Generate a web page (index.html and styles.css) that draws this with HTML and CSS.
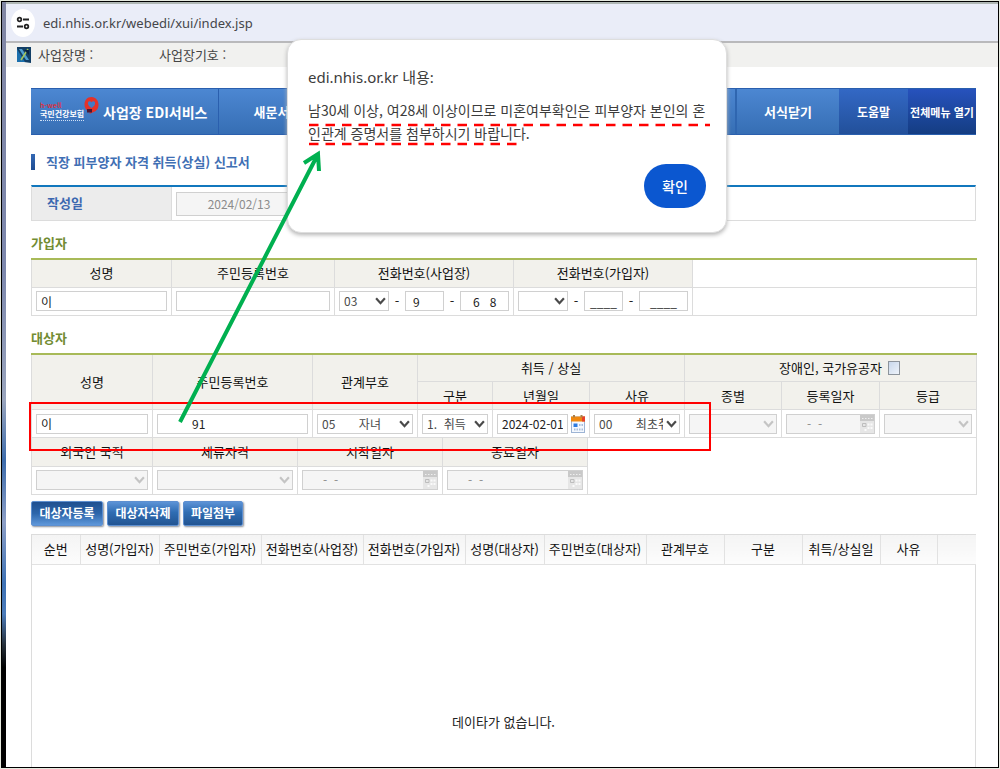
FILE: index.html
```html
<!DOCTYPE html>
<html lang="ko">
<head>
<meta charset="utf-8">
<title>사업장 EDI서비스</title>
<link rel="stylesheet" href="styles.css">
</head>
<body>
<svg class="sprite" aria-hidden="true">
  <symbol id="chevron" viewBox="0 0 10 7"><path d="M1 1l4 4.5L9 1" fill="none" stroke="currentColor" stroke-width="2"/></symbol>
  <symbol id="calendar" viewBox="0 0 14 18">
    <rect x=".5" y="2" width="13" height="15.5" fill="#f4f8fe" stroke="#9db4d4"/>
    <path d="M0 1.500h14v5H0z" fill="#f0880f"/><path d="M11 1.500h3v5h-3z" fill="#e8402a"/>
    <path d="M2 0h2v2.500H2zM9.500 0h2v2.500h-2z" fill="#a9804c"/>
    <path d="M2.500 8.500h4v3.500h-4z" fill="#2c7be0"/>
    <path d="M8 9h1.500v2H8zM10.500 9H12v2h-1.500zM3 13.500h1.500v2H3zM5.500 13.500H7v2H5.500zM8 13.500h1.500v2H8zM10.500 13.500H12v2h-1.500z" fill="#a9bedb"/>
  </symbol>
  <symbol id="calendar-off" viewBox="0 0 14 18">
    <path d="M0 0h14v18H0z" fill="#e6e6e6"/><path d="M0 0h14v6H0z" fill="#c9c9c9"/>
    <path d="M2 3h1.500v1H2zM5 3h1.500v1H5zM8 3h1.500v1H8zM11 3h1.500v1H11z" fill="#eee"/>
    <path d="M2.500 8.500h3.500v3H2.500z" fill="none" stroke="#bdbdbd"/>
    <path d="M7.500 8.500h2v2h-2zM10.500 8.500h2v2h-2zM7.500 12h2v2h-2zM10.500 12h2v2h-2zM4.500 14h2v2h-2z" fill="#fafafa"/>
  </symbol>
</svg>

<div class="frame">
  <header class="urlbar">
    <button class="site-info" aria-label="사이트 정보">
      <svg width="14" height="14" viewBox="0 0 14 14" fill="none" stroke="#222" stroke-width="1.800"><circle cx="3.500" cy="3.500" r="1.800"/><path d="M7 3.500h6M1 10.500h6"/><circle cx="10.500" cy="10.500" r="1.800"/></svg>
    </button>
    <span class="url">edi.nhis.or.kr/webedi/xui/index.jsp</span>
  </header>
  <div class="infobar">
    <svg width="14" height="16" viewBox="0 0 14 16"><path d="M0 0h14v16L0 14z" fill="#123f66"/><path d="M0 2l8 13H0z" fill="#1c70ad"/><path d="M2 2h3l7 11H9z" fill="#4f9ed0"/><path d="M11 2L4 13" stroke="#a7c659" stroke-width="1.500"/><path d="M7 3h5v5z" fill="#0a2443"/></svg>
    <span class="info-name">사업장명 :</span><span>사업장기호 :</span>
  </div>

  <main class="content">
    <nav class="menu">
      <div class="brand">
        <div class="logo">
          <span class="logo-tag">h-well</span>
          <span class="logo-name">국민건강보험</span>
          <span class="logo-rule"></span>
        </div>
        <svg class="logo-mark" width="15" height="18" viewBox="0 0 15 18"><path d="M7.500 0C3 0 .5 3.500.5 7.500S3 14 6 15l-.5 2 4-2C13 14 14.500 11 14.500 7.500S12 0 7.500 0z" fill="#e53228"/><path d="M7.500 11C5 9.500 3.500 7.500 4 5.500c.5-1.500 2.500-1.800 3.500-.3 1-1.500 3-1.200 3.500.3.500 2-1 4-3.500 5.500z" fill="#427bc5"/><path d="M3 12h5v3.500H3z" fill="#4c1733"/></svg>
        <span class="brand-name">사업장 EDI서비스</span>
      </div>
      <button class="item new">새문서</button>
      <div class="item filler"></div>
      <button class="item close">서식닫기</button>
      <button class="item help">도움말</button>
      <button class="item all">전체메뉴 열기</button>
    </nav>

    <h1 class="page-title">직장 피부양자 자격 취득(상실) 신고서</h1>

    <div class="date-row">
      <label class="date-label" for="written">작성일</label>
      <div class="date-cell"><input class="field date" id="written" value="2024/02/13" disabled></div>
    </div>

    <h2 class="section">가입자</h2>
    <table class="form">
      <colgroup><col class="w140"><col class="w163"><col class="w179"><col class="w179"><col class="w284"></colgroup>
      <tr><th>성명</th><th>주민등록번호</th><th>전화번호(사업장)</th><th>전화번호(가입자)</th><td></td></tr>
      <tr>
        <td><input class="field" aria-label="성명" value="이"></td>
        <td><input class="field" aria-label="주민등록번호"></td>
        <td><div class="phone">
          <span class="combo area"><select aria-label="지역번호"><option>03</option></select><svg class="chev"><use href="#chevron"/></svg></span>-
          <input class="field mid" aria-label="국번" value="9">-
          <input class="field end" aria-label="번호" value="6&nbsp;&nbsp;&nbsp;8"></div></td>
        <td><div class="phone">
          <span class="combo area"><select aria-label="지역번호"><option></option></select><svg class="chev"><use href="#chevron"/></svg></span>-
          <input class="field mid blank" aria-label="국번" value="____">-
          <input class="field end blank" aria-label="번호" value="____"></div></td>
        <td></td>
      </tr>
    </table>

    <h2 class="section">대상자</h2>
    <table class="form">
      <colgroup><col class="w121"><col class="w160"><col class="w105"><col class="w75"><col class="w97"><col class="w95"><col class="w97"><col class="w98"><col class="w97"></colgroup>
      <tr><th rowspan="2">성명</th><th rowspan="2">주민등록번호</th><th rowspan="2">관계부호</th><th colspan="3">취득 / 상실</th>
        <th colspan="3"><label class="merit">장애인, 국가유공자 <input class="tick" type="checkbox"></label></th></tr>
      <tr><th>구분</th><th>년월일</th><th>사유</th><th>종별</th><th>등록일자</th><th>등급</th></tr>
      <tr>
        <td><input class="field" aria-label="성명" value="이"></td>
        <td><input class="field resident" aria-label="주민등록번호" value="91"></td>
        <td><span class="combo"><select aria-label="관계부호"><option>05&nbsp;&nbsp;&nbsp;&nbsp;&nbsp;&nbsp;&nbsp;자녀</option></select><svg class="chev"><use href="#chevron"/></svg></span></td>
        <td><span class="combo"><select aria-label="구분"><option>1.&nbsp;&nbsp;취득</option></select><svg class="chev"><use href="#chevron"/></svg></span></td>
        <td><div class="picker"><input class="field" aria-label="년월일" value="2024-02-01"><button class="cal" aria-label="달력"><svg width="14" height="18"><use href="#calendar"/></svg></button></div></td>
        <td><span class="combo"><select aria-label="사유"><option>00&nbsp;&nbsp;&nbsp;&nbsp;&nbsp;&nbsp;&nbsp;최초취득</option></select><svg class="chev"><use href="#chevron"/></svg></span></td>
        <td><span class="combo off"><select aria-label="종별" disabled><option></option></select><svg class="chev"><use href="#chevron"/></svg></span></td>
        <td><div class="picker off"><input class="field" aria-label="등록일자" value="-&nbsp;&nbsp;-" disabled><svg width="14" height="18"><use href="#calendar-off"/></svg></div></td>
        <td><span class="combo off"><select aria-label="등급" disabled><option></option></select><svg class="chev"><use href="#chevron"/></svg></span></td>
      </tr>
    </table>
    <table class="form lower">
      <colgroup><col class="w121"><col class="w145"><col class="w145"><col class="w145"><col class="w389"></colgroup>
      <tr><th>외국인 국적</th><th>체류자격</th><th>시작일자</th><th>종료일자</th><td rowspan="2"></td></tr>
      <tr>
        <td><span class="combo off"><select aria-label="외국인 국적" disabled><option></option></select><svg class="chev"><use href="#chevron"/></svg></span></td>
        <td><span class="combo off"><select aria-label="체류자격" disabled><option></option></select><svg class="chev"><use href="#chevron"/></svg></span></td>
        <td><div class="picker off"><input class="field" aria-label="시작일자" value="-&nbsp;&nbsp;-" disabled><svg width="14" height="18"><use href="#calendar-off"/></svg></div></td>
        <td><div class="picker off"><input class="field" aria-label="종료일자" value="-&nbsp;&nbsp;-" disabled><svg width="14" height="18"><use href="#calendar-off"/></svg></div></td>
      </tr>
    </table>

    <div class="actions">
      <button class="action active">대상자등록</button>
      <button class="action">대상자삭제</button>
      <button class="action short">파일첨부</button>
    </div>

    <section class="list">
      <table class="list-head">
        <colgroup><col class="w48"><col class="w79"><col class="w102"><col class="w102"><col class="w102"><col class="w79"><col class="w102"><col class="w78"><col class="w78"><col class="w78"><col class="w57"><col class="w39"></colgroup>
        <tr><th>순번</th><th>성명(가입자)</th><th>주민번호(가입자)</th><th>전화번호(사업장)</th><th>전화번호(가입자)</th><th>성명(대상자)</th><th>주민번호(대상자)</th><th>관계부호</th><th>구분</th><th>취득/상실일</th><th>사유</th><th></th></tr>
      </table>
      <p class="empty">데이타가 없습니다.</p>
    </section>
  </main>
</div>

<div class="alert" role="alertdialog" aria-labelledby="alert-title" aria-describedby="alert-text">
  <p class="alert-title" id="alert-title">edi.nhis.or.kr 내용:</p>
  <p class="alert-text" id="alert-text">남30세 이상, 여28세 이상이므로 미혼여부확인은 피부양자 본인의 혼<br>인관계 증명서를 첨부하시기 바랍니다.</p>
  <button class="ok">확인</button>
</div>

<div class="highlight"></div>
<svg class="marks" width="720" height="440" viewBox="0 0 720 440" fill="none" aria-hidden="true">
  <path d="M309 125H710M309 144H519" stroke="#f00" stroke-width="2.500" stroke-dasharray="9.500 7"/>
  <path d="M180 422L317 156M304 163l14-9 1 17" stroke="#00b050" stroke-width="4"/>
</svg>
</body>
</html>
```
FILE: styles.css
```css
* { box-sizing: border-box; }

body {
  margin: 0;
  background: #e6eadf;
  color: #222;
  font: 13px/20px "Noto Sans CJK KR", sans-serif;
}

h1, h2, p { margin: 0; }
button, input, select { font: inherit; color: inherit; }
button { border: 0; padding: 0; cursor: pointer; }
svg { flex: none; }

.sprite { position: absolute; width: 0; height: 0; }

.frame {
  display: flex;
  flex-direction: column;
  min-height: calc(100vh - 2px);
  margin: 1px;
  border: 1px solid #000;
  padding-left: 4px;
  background: linear-gradient(#8187a4 0, #7d88ad 35%, #9aa5bd 52%, #3d6cab 60%, #8d9fc6 68%, #3e72b4 76%, #4c7cba 80%, #26303b 84%, #000 87%) left / 4px 100% no-repeat, #fff;
}

.urlbar {
  display: flex;
  align-items: center;
  gap: 8px;
  height: 41px;
  padding-left: 5px;
  border-top: 2px solid #b0b8b5;
  border-bottom: 2px solid #b9b9bb;
  background: #eaedf8;
}

.site-info {
  display: grid;
  place-items: center;
  width: 24px;
  height: 28px;
  border-radius: 50%;
  background: #fff;
}

.url { font: 13px/20px "Noto Sans", sans-serif; color: #45464a; }

.infobar {
  display: flex;
  align-items: center;
  gap: 7px;
  height: 24px;
  padding-left: 11px;
  background: #f1f1ef;
  color: #444;
}

.info-name { width: 114px; }

.content {
  display: flex;
  flex: 1;
  flex-direction: column;
  padding: 21px 22px 0 25px;
  background: #fff;
}

.menu {
  display: flex;
  height: 47px;
  color: #fff;
  font-weight: 700;
}

.brand, .item {
  border: solid #2a5fae;
  border-width: 1px 0;
  background: linear-gradient(#4c87d2, #366eb4);
}

.brand { display: flex; align-items: center; width: 187px; padding-left: 9px; }
.logo { display: flex; flex-direction: column; width: 44px; white-space: nowrap; }
.logo-tag { color: #d03648; font-size: 7px; line-height: 7px; }
.logo-name { font-size: 8px; line-height: 10px; }
.logo-rule { height: 2px; border-bottom: 1px dotted #cfe0f5; }
.logo-mark { margin-bottom: 12px; }
.brand-name { margin-left: 4px; font-size: 14px; white-space: nowrap; }

.new { width: 106px; border-left: 1px solid #2a5fae; }
.filler { flex: 1; }
.close { width: 104px; border-left: 2px solid #2f66b0; }
.help { width: 69px; background: linear-gradient(#3368c5, #22509a); font-size: 12px; }
.all { width: 68px; background: linear-gradient(#2752bd, #143d82); font-size: 11px; }

.page-title {
  margin: 17px 0 13px;
  padding-left: 11px;
  background: linear-gradient(#3368b4, #1f4c92) left / 4px 16px no-repeat;
  padding-left: 15px;
  color: #3f6fb4;
  font-size: 13px;
  line-height: 20px;
}

.date-row {
  display: flex;
  height: 36px;
  border: 1px solid #dcdcdc;
  border-top: 2px solid #1177bd;
}

.date-label {
  width: 140px;
  padding: 6px 15px;
  border-right: 1px solid #dcdcdc;
  background: #ececec;
  color: #3c68b0;
  font-weight: 700;
}

.date-cell { display: flex; align-items: center; padding-left: 4px; }
.field.date { width: 126px; height: 24px; text-align: center; }

.section {
  margin: 12px 0 5px;
  color: #728c32;
  font-size: 13px;
  line-height: 20px;
}

.form, .list-head {
  width: 100%;
  table-layout: fixed;
  border-collapse: collapse;
}

.form { border-top: 2px solid #a8ba58; }
.form.lower { border-top: 0; }
.form.lower tr:first-child > * { border-top: 0; }

.form th, .form td {
  height: 28px;
  padding: 0 4px;
  border: 1px solid #dcdcdc;
}

.form th {
  background: #f2f1ec;
  color: #111;
  font-weight: 400;
  line-height: 20px;
}

.form tr:first-child > * { border-top-width: 0; }

.w39 { width: 39px; }
.w48 { width: 48px; }
.w57 { width: 57px; }
.w75 { width: 75px; }
.w78 { width: 78px; }
.w79 { width: 79px; }
.w95 { width: 95px; }
.w97 { width: 97px; }
.w98 { width: 98px; }
.w102 { width: 102px; }
.w105 { width: 105px; }
.w121 { width: 121px; }
.w140 { width: 140px; }
.w145 { width: 145px; }
.w160 { width: 160px; }
.w163 { width: 163px; }
.w179 { width: 179px; }
.w284 { width: 284px; }
.w389 { width: 389px; }

.field, .combo select {
  display: block;
  width: 100%;
  min-width: 0;
  height: 20px;
  margin: 0;
  padding: 0 4px;
  border: 1px solid #d0d0d0;
  border-radius: 0;
  background: #fff;
  font-size: 12px;
  line-height: 18px;
}

.field:disabled, .off select:disabled {
  background: #f5f5f5;
  color: #8c8c8c;
  opacity: 1;
}

.resident { padding-left: 34px; }

.combo { display: grid; align-items: center; color: #4a4a4a; }
.combo > * { grid-area: 1 / 1; }
.combo select { appearance: none; padding-right: 16px; overflow: hidden; }
.chev { justify-self: end; width: 11px; height: 8px; margin-right: 3px; pointer-events: none; }
.off .chev { color: #c4c4c4; }

.phone { display: flex; align-items: center; justify-content: space-between; }
.phone .area { width: 50px; }
.phone .mid { width: 39px; padding-left: 7px; }
.phone .end { width: 49px; padding-left: 12px; }
.phone .blank { padding: 0; text-align: center; }

.picker { display: flex; align-items: center; gap: 3px; }
.picker .field { flex: 1; }
.cal { display: grid; background: none; }
.picker.off { height: 20px; gap: 0; border: 1px solid #d0d0d0; background: #f5f5f5; }
.picker.off .field { height: 18px; padding-left: 20px; border: 0; }

.merit { display: inline-flex; align-items: center; gap: 6px; padding-left: 18px; }
.tick {
  appearance: none;
  width: 12px;
  height: 14px;
  margin: 0;
  border: 1px solid #8d949c;
  background: linear-gradient(135deg, #c9d8ec, #eef3fa);
}

.actions { display: flex; gap: 4px; margin: 6px 0 8px; }
.action {
  width: 72px;
  height: 25px;
  border: 1px solid #5d8fd0;
  border-radius: 2px;
  background: linear-gradient(#5c93d6, #2f6db3 45%, #225492);
  box-shadow: 1px 1px 2px #8a8f98;
  color: #fff;
  font-size: 12px;
  font-weight: 700;
  line-height: 20px;
}
.action.active { background: linear-gradient(#1f4f8f, #2d66ab 50%, #5e97da); }
.action.short { width: 60px; }

.list {
  display: flex;
  flex: 1;
  flex-direction: column;
  justify-content: space-between;
  min-height: 230px;
  border: 1px solid #dcdcdc;
  border-bottom: 0;
}

.list-head th {
  height: 30px;
  padding: 0;
  border: solid #e2e2e2;
  border-width: 0 1px 1px 0;
  background: linear-gradient(#f4f4f4, #fcfcfc);
  color: #111;
  font-weight: 400;
  white-space: nowrap;
}
.list-head th:last-child { border-right: 0; }

.empty { padding-bottom: 35px; text-align: center; }

.alert {
  position: absolute;
  top: 39px;
  left: 287px;
  display: flex;
  flex-direction: column;
  width: 440px;
  height: 194px;
  padding: 27px 20px 24px;
  border: 1px solid #dedede;
  border-radius: 14px;
  background: #fff;
  box-shadow: 0 2px 4px #b5b5b5;
  color: #3c3c3c;
}

.alert-title { font: 15px/20px "Noto Sans", "Noto Sans CJK KR", sans-serif; }
.alert-text { margin-top: 12px; font-size: 14px; line-height: 23px; white-space: nowrap; }
.ok {
  align-self: flex-end;
  width: 62px;
  height: 44px;
  margin-top: auto;
  border-radius: 22px;
  background: #0b57d0;
  color: #fff;
  font-size: 14px;
  font-weight: 500;
}

.highlight {
  position: absolute;
  top: 402px;
  left: 29px;
  width: 682px;
  height: 49px;
  border: 2px solid #f00;
  pointer-events: none;
}

.marks { position: absolute; top: 0; left: 0; pointer-events: none; }
```
